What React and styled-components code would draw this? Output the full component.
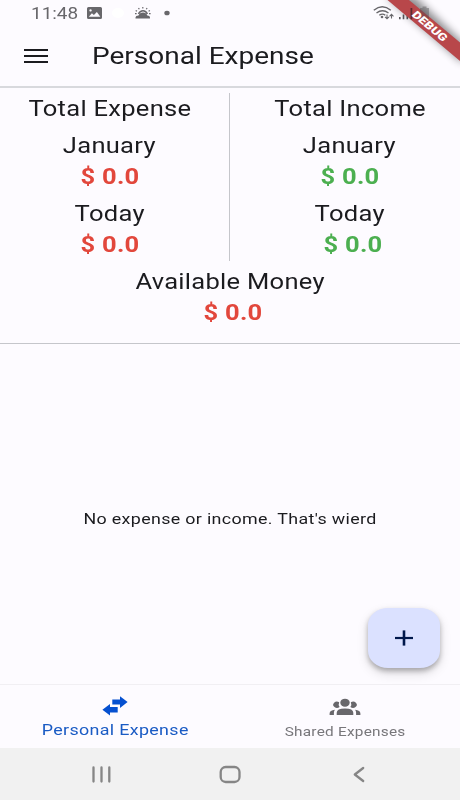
import React from 'react';
import styled, { createGlobalStyle } from 'styled-components';

const GlobalStyle = createGlobalStyle`
  * { box-sizing: border-box; }
  body { margin: 0; background: #fdfbff; font-family: Roboto, sans-serif; color: #1b1b1f; }
`;

const Screen = styled.div`
  position: relative;
  width: 460px;
  height: 800px;
  display: flex;
  flex-direction: column;
  overflow: hidden;
  background: #fdfbff;
`;

const Label = styled.span`
  display: block;
  white-space: nowrap;
  color: ${(p) => p.$color || '#1b1b1f'};
  font-size: ${(p) => p.$size || 21.6}px;
  font-weight: ${(p) => p.$weight || 400};
  line-height: ${(p) => p.$line || 31}px;
  letter-spacing: ${(p) => p.$spacing ?? 0.24}px;
  transform: scaleX(1.182);
  transform-origin: ${(p) => p.$origin || 'center'};
`;

const Clock = styled(Label).attrs({ $size: 16, $line: 28, $spacing: 0, $origin: 'left', $color: '#68676b' })`
  padding-top: 2px;
`;

const Period = styled(Label)`
  margin: 6px 0 1px;
`;

const Amount = styled(Label).attrs({ $weight: 700, $line: 30 })`
  margin-left: ${(p) => p.$shift || 0}px;
`;

const StatusBar = styled.div`
  height: 26px;
  padding: 0 31px;
  display: flex;
  align-items: center;
`;

const StatusIcons = styled.svg`
  display: block;
  flex: none;
  margin-left: ${(p) => p.$left || 0}px;
`;

const AppBar = styled.header`
  height: 62px;
  padding: 0 24px;
  display: flex;
  align-items: center;
  gap: 44px;
  border-bottom: 2px solid #d8d9dd;
`;

const MenuButton = styled.button`
  width: 23.5px;
  height: 14px;
  margin-bottom: 1px;
  padding: 0;
  border: 0;
  background: none;
  display: flex;
  flex-direction: column;
  justify-content: space-between;
`;

const MenuLine = styled.i`
  display: block;
  height: 2px;
  background: #1b1b1f;
`;

const Summary = styled.section`
  height: 256px;
  padding-top: 5px;
  border-bottom: 1px solid #c5c6cb;
`;

const Columns = styled.div`
  display: grid;
  grid-template-columns: 229px 1px 1fr;
  height: 168px;
`;

const Column = styled.div`
  display: flex;
  flex-direction: column;
  align-items: center;
  padding: ${(p) => (p.$end ? '0 0 0 9.5px' : '0 9.5px 0 0')};
`;

const Divider = styled.div`
  background: #c5c6cb;
`;

const Available = styled.div`
  display: flex;
  flex-direction: column;
  align-items: center;
  margin-top: -1px;
`;

const Empty = styled.main`
  flex: 1;
  display: flex;
  align-items: center;
  justify-content: center;
  padding-top: 10px;
`;

const AddButton = styled.button`
  position: absolute;
  left: 368px;
  top: 608px;
  width: 72px;
  height: 60px;
  padding: 0;
  border: 0;
  border-radius: 20px / 17px;
  background: #dbe1ff;
  display: flex;
  align-items: center;
  justify-content: center;
  box-shadow: 0 3px 5px rgba(0,0,0,.25), 0 5px 12px rgba(0,0,0,.14);
`;

const Tabs = styled.nav`
  height: 64px;
  border-top: 1px solid #f1eff3;
  display: grid;
  grid-template-columns: 1fr 1fr;
`;

const Tab = styled.div`
  display: flex;
  flex-direction: column;
  align-items: center;
  padding-top: 8px;
`;

const SystemNav = styled.footer`
  height: 52px;
  background: #f1f1f1;
`;

const Ribbon = styled.svg`
  position: absolute;
  top: 0;
  right: 0;
`;

function Status() {
  return (
    <StatusBar>
      <Clock>11:48</Clock>
      <StatusIcons width="90" height="26" viewBox="84 0 90 26" $left={13}>
        <path fill="#68676b" fillRule="evenodd" d="M88.500 7h12a1.500 1.500 0 0 1 1.500 1.500v9a1.500 1.500 0 0 1-1.500 1.500h-12a1.500 1.500 0 0 1-1.500-1.500v-9A1.500 1.500 0 0 1 88.500 7zM88.800 16.800h11.500l-3.400-4.800-3 3-2-1.800zM90.500 9.200a1.200 1.200 0 1 0 .1 0z" />
        <ellipse cx="118" cy="13" rx="6" ry="5" fill="#fff" />
        <path fill="#68676b" d="M135.500 18.600v-1.200q0-1.600 3-1.900 1.200-2.900 4.500-2.900t4.300 2.900q2.700.3 2.700 1.900v1.200z" />
        <path fill="none" stroke="#68676b" strokeWidth="1.600" d="M138.500 14q1.500-3.200 4.500-3.200t4.300 3.200" />
        <path fill="none" stroke="#68676b" strokeWidth="1.200" d="M142.800 7v1.600M138.500 8l.8 1.300M147.100 8l-.8 1.300M135.700 10.500l1.300.8M149.900 10.500l-1.300.8M135 13.700h1.600M149 13.700h1.600" />
        <ellipse cx="167" cy="13" rx="2.700" ry="2.300" fill="#68676b" />
      </StatusIcons>
      <StatusIcons width="62" height="26" viewBox="370 0 62 26" $left={196}>
        <g fill="none" stroke="#68676b" strokeWidth="1.400">
          <path d="M373.800 10.200q8.500-7 17 0M376.500 13q6-4.500 12 0M379.300 15.300q3.200-2.400 6 0" />
          <path d="M387 14.500v4M385 16.800l2 2 2-2M391.500 18.500v-4M389.500 16.300l2-2 2 2" strokeWidth="1.100" />
        </g>
        <circle cx="382" cy="17" r="1.300" fill="#68676b" />
        <path fill="#59585c" d="M399 17h1.600v2.300H399zM402.700 14.500h1.600v4.800h-1.600zM406.500 11.500h1.600v7.800h-1.600z" />
      </StatusIcons>
    </StatusBar>
  );
}

function SystemButtons() {
  return (
    <svg width="460" height="52" viewBox="0 748 460 52" fill="none" stroke="#868686" strokeWidth="2.300" strokeLinecap="round" strokeLinejoin="round">
      <path d="M93.500 767.500v14M101.500 767.500v14M109.300 767.500v14" />
      <rect x="220.700" y="767" width="18.800" height="15" rx="5" />
      <path d="M363.200 768l-8.400 6.500 8.400 6.500" />
    </svg>
  );
}

export default function App() {
  const red = '#e2473c';
  const green = '#4caf50';
  return (
    <>
      <GlobalStyle />
      <Screen>
        <Status />
        <AppBar>
          <MenuButton aria-label="Menu"><MenuLine /><MenuLine /><MenuLine /></MenuButton>
          <Label $size={23.7} $spacing={0} $origin="left">Personal Expense</Label>
        </AppBar>
        <Summary>
          <Columns>
            <Column>
              <Label>Total Expense</Label>
              <Period>January</Period>
              <Amount $color={red}>$ 0.0</Amount>
              <Period>Today</Period>
              <Amount $color={red}>$ 0.0</Amount>
            </Column>
            <Divider />
            <Column $end>
              <Label>Total Income</Label>
              <Period>January</Period>
              <Amount $color={green}>$ 0.0</Amount>
              <Period>Today</Period>
              <Amount $color={green} $shift={6.5}>$ 0.0</Amount>
            </Column>
          </Columns>
          <Available>
            <Period>Available Money</Period>
            <Amount $color={red} $shift={6.5}>$ 0.0</Amount>
          </Available>
        </Summary>
        <Empty><Label $size={15.1} $line={20} $spacing={0.29}>No expense or income. That's wierd</Label></Empty>
        <Tabs>
          <Tab>
            <svg width="30" height="24" viewBox="100 693 30 24" fill="#0550d0">
              <path d="M112.300 699.600h7.700v-3.300l7.600 5.800-7.600 5.800v-3.300h-7.700zM117.700 712.600H110v3l-7.600-5.800 7.600-5.800v3h7.700z" />
            </svg>
            <Label $size={15.1} $line={26} $spacing={0.3} $color="#1a5bc4">Personal Expense</Label>
          </Tab>
          <Tab>
            <svg width="32" height="26" viewBox="329 693 32 26" fill="#68676b">
              <ellipse cx="345" cy="702.700" rx="4.700" ry="4" />
              <path d="M339.200 702.200a6 5.200 0 0 0 .4 4.800 3.700 3.200 0 1 1-.4-4.800zM350.800 702.200a6 5.200 0 0 1-.4 4.800 3.700 3.200 0 1 0 .4-4.800z" />
              <path d="M336.700 715v-2.200q0-4.300 8.300-4.300t8.300 4.300v2.200zM329.600 715v-1.500q0-3.300 5.400-3.700-1.100 1.200-1.100 3v2.200zM360.400 715v-1.500q0-3.300-5.400-3.700 1.100 1.200 1.100 3v2.200z" />
            </svg>
            <Label $size={13} $line={25} $spacing={0.2} $color="#78777b">Shared Expenses</Label>
          </Tab>
        </Tabs>
        <SystemNav><SystemButtons /></SystemNav>
        <AddButton aria-label="Add">
          <svg width="20" height="18" viewBox="0 0 20 18" stroke="#00174b" fill="none">
            <path d="M1 9h18" strokeWidth="2.200" />
            <path d="M10 1.400v15.200" strokeWidth="2.600" />
          </svg>
        </AddButton>
        <Ribbon width="80" height="80" viewBox="380 0 80 80">
          <defs>
            <filter id="soft" x="-30%" y="-30%" width="160%" height="160%"><feGaussianBlur stdDeviation="4" /></filter>
          </defs>
          <path d="M386 -4L464 64V44L414 -4z" fill="#000" opacity=".45" filter="url(#soft)" />
          <path d="M387.500 0h21.500L460 42.500V61z" fill="#b8474a" />
          <path d="M410.500 8h1.800v11.300h-1.800z" fill="#5c2b30" />
          <path d="M422.500 6.500h4V8h2.500v12h-9V8h2.500z" fill="#4a484c" opacity=".4" />
          <text transform="matrix(.903 .764 -.764 .646 430 26)" textAnchor="middle" y="4" fontFamily="Roboto, sans-serif" fontSize="11" fontWeight="900" fill="#fff">DEBUG</text>
        </Ribbon>
      </Screen>
    </>
  );
}
